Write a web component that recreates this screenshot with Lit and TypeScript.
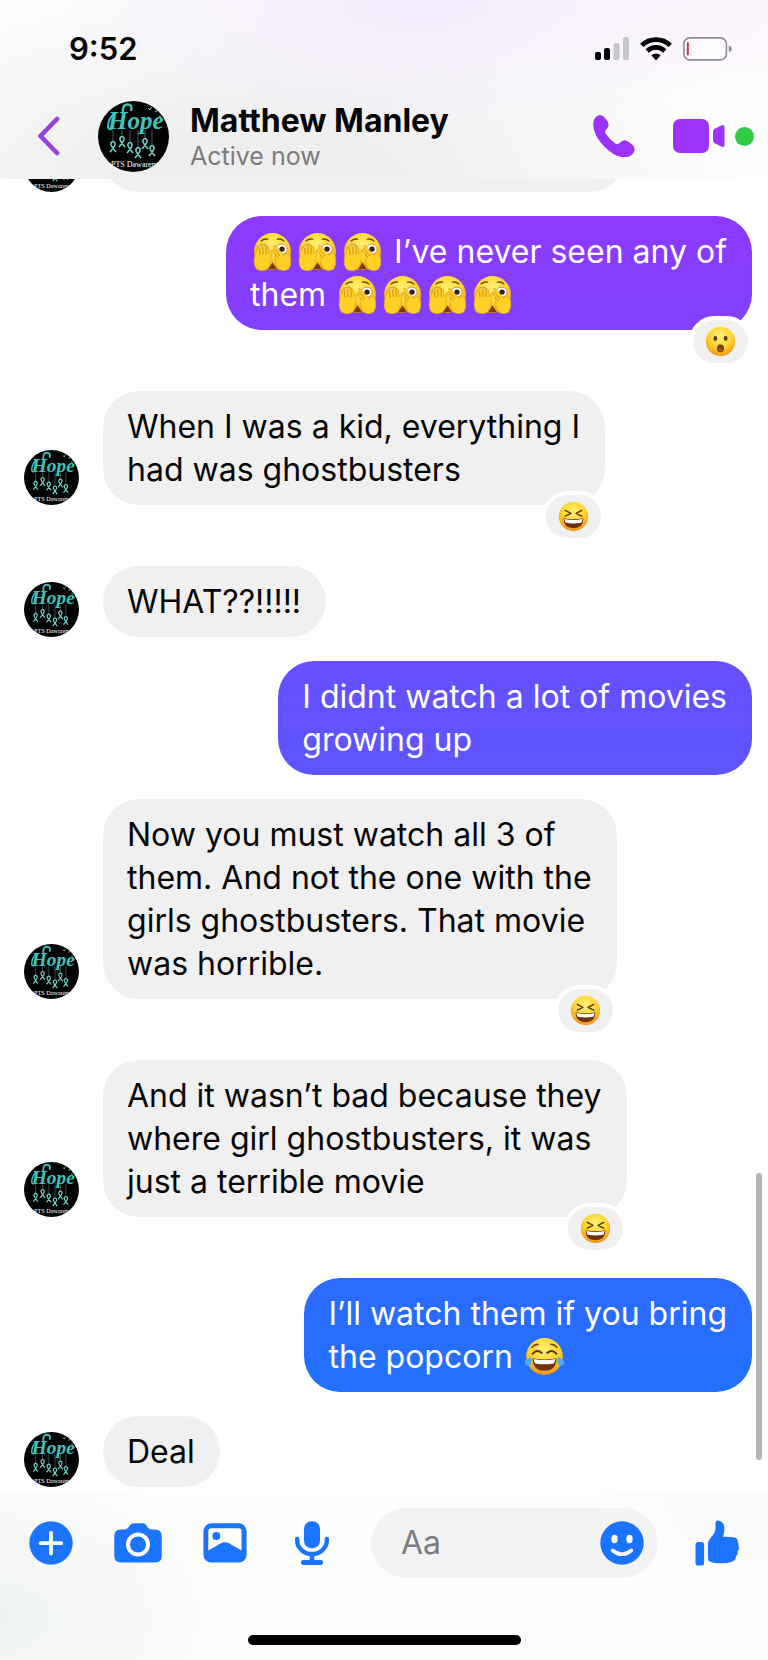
import { LitElement, html, css, svg, TemplateResult } from "lit";
import { customElement, property } from "lit/decorators.js";
import { classMap } from "lit/directives/class-map.js";

type EmojiName = "peek" | "wow" | "laugh" | "joy";
type Piece = string | { emoji: EmojiName };

interface Message {
  from: "them" | "me";
  tone?: "violet" | "indigo" | "blue";
  lines: Piece[][];
  reaction?: EmojiName;
}

const e = (emoji: EmojiName): Piece => ({ emoji });

const MESSAGES: Message[] = [
  {
    from: "me",
    tone: "violet",
    lines: [
      [e("peek"), e("peek"), e("peek"), " I’ve never seen any of"],
      ["them ", e("peek"), e("peek"), e("peek"), e("peek")],
    ],
    reaction: "wow",
  },
  { from: "them", lines: [["When I was a kid, everything I"], ["had was ghostbusters"]], reaction: "laugh" },
  { from: "them", lines: [["WHAT??!!!!!"]] },
  { from: "me", tone: "indigo", lines: [["I didnt watch a lot of movies"], ["growing up"]] },
  {
    from: "them",
    lines: [
      ["Now you must watch all 3 of"],
      ["them. And not the one with the"],
      ["girls ghostbusters. That movie"],
      ["was horrible."],
    ],
    reaction: "laugh",
  },
  {
    from: "them",
    lines: [["And it wasn’t bad because they"], ["where girl ghostbusters, it was"], ["just a terrible movie"]],
    reaction: "laugh",
  },
  { from: "me", tone: "blue", lines: [["I’ll watch them if you bring"], ["the popcorn ", e("joy")]] },
  { from: "them", lines: [["Deal"]] },
];

@customElement("emoji-face")
export class EmojiFace extends LitElement {
  @property() name: EmojiName = "laugh";

  static styles = css`
    :host {
      display: inline-block;
      line-height: 0;
    }
    .face {
      display: block;
      width: 100%;
      height: auto;
    }
  `;

  private labels: Record<EmojiName, string> = {
    peek: "Face with peeking eye",
    wow: "Face with open mouth",
    laugh: "Grinning squinting face",
    joy: "Face with tears of joy",
  };

  private features(): TemplateResult {
    switch (this.name) {
      case "peek":
        return svg`
          <path d="M7.500 8.200q3-2.400 6-1.600M22.500 6.600q3.500-.8 6 1.600" fill="none" stroke="#7a4a06" stroke-width="1.300" stroke-linecap="round"/>
          <ellipse cx="26.500" cy="15.800" rx="5" ry="4.600" fill="#fff" stroke="#b98a3a" stroke-width=".8"/>
          <circle cx="26.800" cy="15.800" r="2.500" fill="#3a2010"/>
          <ellipse cx="9" cy="16" rx="5.200" ry="4.800" fill="#f3dfa0" stroke="#b98a3a" stroke-width=".8"/>
          <path d="M14 34.300l4-6.300 4 6.300z" fill="#7a3a06"/>
          <path d="M1.200 24.500Q2 19.500 4.300 14.800q.9-1.100 1.700 0l.9-1.700q1.100-1.100 2 0l1.100-.9q1.200-.7 1.900.6l.9.4q1.200-.6 1.500.8l.5 6.200 1.800-3.200q1.400-.6 1.300 1.200l-1.600 7.700q-.2 5.700-3.200 8.600-4.500 2.400-9.500 0-3.200-3.600-2.400-10z" fill="#ffd127" stroke="#e39c1c" stroke-width=".6"/>
          <path d="M6 15l.6 6M8.900 13.500l.5 7M12 13.200l.2 7.300" stroke="#c98210" stroke-width=".8" fill="none"/>
          <path d="M34.800 24.500q-.3-3-2-4.400-1.800-.8-4.700 1.400l-7.800-9.300q-1.400-.6-1.200.9l2.400 5-2.400-2.600q-1.300 0-.8 1.300l2.300 4.700q-.6.800 0 2.500.4 6.800 3 10.500 4.500 2.400 9.200 0 2.800-3.600 2-10z" fill="#ffd127" stroke="#e39c1c" stroke-width=".6"/>
          <path d="M21.500 18l3.500 4.200M20.300 20.500l3.200 3.700" stroke="#c98210" stroke-width=".8" fill="none"/>`;
      case "wow":
        return svg`
          <ellipse cx="12" cy="14.500" rx="2.200" ry="2.800" fill="#5b3405"/>
          <ellipse cx="24" cy="14.500" rx="2.200" ry="2.800" fill="#5b3405"/>
          <ellipse cx="18" cy="26" rx="4" ry="4.400" fill="#6d3d06"/>
          <ellipse cx="18" cy="27.500" rx="2.500" ry="2.500" fill="#a15a1b"/>`;
      case "joy":
        return svg`
          <path d="M6.500 9.500q2.500-3 5.500-2.600M24 6.900q3-.4 5.500 2.600" fill="none" stroke="#7a4a06" stroke-width="1.500" stroke-linecap="round"/>
          <path d="M7 15.500q4-4.600 8.500-.8M20.500 14.700q4.500-3.800 8.500.8" fill="none" stroke="#5b3405" stroke-width="1.800" stroke-linecap="round"/>
          <path d="M7 19.500q11 2.600 22 0 0 11.500-11 11.500T7 19.500z" fill="#70320b"/>
          <path d="M8 20.200q10 2.200 20 0-.2 2.500-1.400 4.200-8.600 1.600-17.200 0Q8.200 22.700 8 20.200z" fill="#fff"/>
          <path d="M5.500 18.500q1.500 4.500-.6 7-2.300 2-4.400 0-1.600-2.300 0-4 2-1.200 5-3zM30.500 18.500q-1.500 4.500.6 7 2.300 2 4.400 0 1.600-2.300 0-4-2-1.200-5-3z" fill="#4aa9ea"/>`;
      default:
        return svg`
          <path d="M8.500 11l6.500 3.300-6.500 3.300M27.500 11L21 14.300l6.500 3.300" fill="none" stroke="#5b3405" stroke-width="1.700" stroke-linecap="round" stroke-linejoin="round"/>
          <path d="M6.500 20q11.500 2.600 23 0 0 11.500-11.500 11.500T6.500 20z" fill="#70320b"/>
          <path d="M7.500 20.800q10.500 2.300 21 0-.2 2.700-1.500 4.500-9 1.700-18 0-1.300-1.800-1.500-4.500z" fill="#fff"/>`;
    }
  }

  render() {
    return html`<svg class="face" viewBox="0 0 36 36" role="img" aria-label=${this.labels[this.name]}>
      <defs>
        <radialGradient id="skin" cx=".5" cy=".32" r=".7">
          <stop offset="0" stop-color="#fff27a" />
          <stop offset=".55" stop-color="#ffd52e" />
          <stop offset="1" stop-color="#ee8f14" />
        </radialGradient>
      </defs>
      <circle cx="18" cy="18" r="17" fill="url(#skin)" />
      ${this.features()}
    </svg>`;
  }
}

@customElement("contact-avatar")
export class ContactAvatar extends LitElement {
  static styles = css`
    :host {
      display: block;
      flex: none;
    }
    .disc {
      display: block;
      width: 100%;
      height: auto;
    }
    .script {
      font: italic 700 25px "Liberation Serif", serif;
      fill: #3fc4bb;
    }
    .caption {
      font: 400 8px "Liberation Serif", serif;
      fill: #ffffff;
    }
  `;

  render() {
    const ribbons = [
      [15, 45],
      [24, 40],
      [32, 46],
      [40, 51],
      [47, 42],
      [54, 49],
    ];
    return html`<svg class="disc" viewBox="0 0 71 71" role="img" aria-label="Matthew Manley">
      <defs>
        <clipPath id="round"><circle cx="35.500" cy="35.500" r="35.500" /></clipPath>
      </defs>
      <g clip-path="url(#round)">
        <rect width="71" height="71" fill="#020303" />
        ${ribbons.map(
          ([x, y]) => svg`
            <path d="M${x} 29V${y - 5}" stroke="#6f8482" stroke-width=".7"/>
            <path d="M${x - 3} ${y + 6}C${x - 1} ${y + 3} ${x + 3} ${y} ${x + 2} ${y - 3}Q${x} ${y - 6} ${x - 2} ${y - 3}C${x - 3} ${y} ${x + 1} ${y + 3} ${x + 3} ${y + 6}"
              fill="none" stroke="#74d8cf" stroke-width="1.500"/>`,
        )}
        <path d="M25 12Q24 3.500 29.500 3.500T33 10" fill="none" stroke="#3fc4bb" stroke-width="2.400" />
        <path d="M17 12q-7 5-7 14 1 4 5 1" fill="none" stroke="#3fc4bb" stroke-width="1.800" />
        <text class="script" x="10" y="28">Hope</text>
        <path d="M50 7l2 2 1.500-3M57 10l1.500 1 1-2.500M54 3l1 1.500 2-1.500M61 15l1 .8 1.200-1" fill="none" stroke="#8fd8d2" stroke-width=".9" />
        <text class="caption" x="13" y="66">PTS Dawareness</text>
      </g>
    </svg>`;
  }
}

@customElement("chat-message")
export class ChatMessage extends LitElement {
  @property({ attribute: false }) message!: Message;

  static styles = css`
    :host {
      display: block;
    }
    .row {
      display: flex;
      align-items: flex-end;
      gap: 24px;
    }
    .row.me {
      justify-content: flex-end;
    }
    .row.reacted {
      margin-bottom: 37px;
    }
    .avatar {
      width: 55px;
    }
    .bubble {
      position: relative;
      padding: 14px 25px 14px 24px;
      border-radius: 36px;
      background: #f0f0f0;
      color: #050505;
      font-size: 32px;
      line-height: 43px;
    }
    .line {
      display: block;
      white-space: pre;
      height: 43px;
    }
    .violet {
      background: linear-gradient(#8d39ff, #8140ff);
      color: #fff;
    }
    .indigo {
      background: linear-gradient(#674fff, #5e55ff);
      color: #fff;
    }
    .blue {
      background: linear-gradient(#2c6aff, #2271ff);
      color: #fff;
    }
    .glyph {
      width: 39px;
      margin: 0 3px;
      vertical-align: -8px;
    }
    .reaction {
      position: absolute;
      right: 0;
      bottom: -37px;
      display: grid;
      place-items: center;
      box-sizing: border-box;
      width: 63px;
      height: 51px;
      border: 4px solid #fff;
      border-radius: 26px;
      background: #f0f0f0;
    }
    .small {
      width: 31px;
    }
  `;

  render() {
    const m = this.message;
    return html`<div class=${classMap({ row: true, me: m.from === "me", reacted: !!m.reaction })}>
      ${m.from === "them" ? html`<contact-avatar class="avatar"></contact-avatar>` : null}
      <div class=${classMap({ bubble: true, [m.tone ?? "plain"]: true })}>
        ${m.lines.map(
          (line) =>
            html`<span class="line"
              >${line.map((p) =>
                typeof p === "string" ? p : html`<emoji-face class="glyph" name=${p.emoji}></emoji-face>`,
              )}</span
            >`,
        )}
        ${m.reaction
          ? html`<span class="reaction"><emoji-face class="small" name=${m.reaction}></emoji-face></span>`
          : null}
      </div>
    </div>`;
  }
}

@customElement("app-root")
export class AppRoot extends LitElement {
  static styles = css`
    :host {
      display: flex;
      flex-direction: column;
      height: 100vh;
      overflow: hidden;
      background: #fff;
      color: #050505;
      font-family: Inter, "Liberation Sans", sans-serif;
    }
    button {
      display: grid;
      place-items: center;
      flex: none;
      padding: 0;
      border: 0;
      background: none;
      color: inherit;
    }
    svg {
      display: block;
    }
    .top {
      flex: none;
      background:
        radial-gradient(ellipse 48% 75% at 55% 0, #f4eafd, #f4eafd00),
        radial-gradient(ellipse 30% 60% at 96% 0, #fdf5fd, #fdf5fd00),
        radial-gradient(ellipse 62% 110% at 34% 100%, #efefef 30%, #efefef00),
        #fdfdfd;
    }
    .status {
      display: flex;
      align-items: center;
      justify-content: space-between;
      height: 98px;
      padding: 0 36px 0 69px;
    }
    .clock {
      font-size: 31px;
      font-weight: 600;
      line-height: 40px;
    }
    .signals {
      display: flex;
      align-items: center;
      gap: 11px;
    }
    .head {
      display: flex;
      align-items: center;
      height: 76px;
      padding: 0 14px 5px 27px;
    }
    .back {
      width: 44px;
      height: 48px;
      color: #9a3fdf;
    }
    .portrait {
      width: 71px;
      margin: 0 21px 0 27px;
    }
    .who {
      flex: 1;
      min-width: 0;
    }
    .name {
      margin: 0;
      font-size: 32px;
      font-weight: 700;
      line-height: 40px;
      white-space: nowrap;
    }
    .presence {
      margin: 0;
      color: #7c7c7e;
      font-size: 25px;
      line-height: 30px;
    }
    .calls {
      display: flex;
      align-items: center;
      color: #9c33fb;
    }
    .video {
      margin: 0 10px 0 38px;
    }
    .online {
      width: 19px;
      height: 19px;
      border-radius: 50%;
      background: #31cc46;
    }
    .thread {
      position: relative;
      flex: 1;
      min-height: 0;
      display: flex;
      flex-direction: column;
      justify-content: flex-end;
      gap: 24px;
      padding: 0 16px 5px 24px;
      overflow: hidden;
    }
    .earlier {
      display: flex;
      align-items: flex-end;
      gap: 24px;
    }
    .earlier-avatar {
      width: 55px;
    }
    .earlier-bubble {
      width: 522px;
      height: 71px;
      border-radius: 36px;
      background: #f0f0f0;
    }
    .scroll {
      position: absolute;
      right: 6px;
      bottom: 32px;
      width: 6px;
      height: 287px;
      border-radius: 3px;
      background: #b5b5b5;
    }
    .bottom {
      flex: none;
      padding: 16px 27px 15px;
      background:
        radial-gradient(ellipse 32% 100% at 0 75%, #eff2f3, #eff2f300),
        radial-gradient(ellipse 26% 80% at 100% 0, #f9f9f9, #f9f9f900),
        #fefefe;
      color: #1b74ff;
    }
    .composer {
      display: flex;
      align-items: center;
      gap: 35px;
    }
    .tools {
      display: flex;
      gap: 39px;
    }
    .tool {
      width: 48px;
      height: 48px;
    }
    .field {
      display: flex;
      align-items: center;
      flex: 1;
      min-width: 0;
      height: 70px;
      padding: 0 14px 0 30px;
      border-radius: 35px;
      background: #f3f3f3;
    }
    .input {
      flex: 1;
      min-width: 0;
      padding: 0;
      border: 0;
      outline: 0;
      background: none;
      color: #050505;
      font: 400 32px/40px Inter, "Liberation Sans", sans-serif;
    }
    .input::placeholder {
      color: #7c7c7e;
      opacity: 1;
    }
    .home {
      width: 273px;
      height: 10px;
      margin: 57px auto 0;
      border-radius: 5px;
      background: #000;
    }
  `;

  render() {
    return html`
      <header class="top">
        <div class="status">
          <time class="clock">9:52</time>
          <div class="signals">
            <svg width="34" height="24" viewBox="0 0 34 24" role="img" aria-label="Cellular signal">
              <rect x="0" y="15" width="6" height="8" rx="2" fill="#000" />
              <rect x="9" y="11" width="6" height="12" rx="2" fill="#000" />
              <rect x="18.500" y="6" width="6" height="17" rx="2" fill="#c7c6ca" />
              <rect x="28" y="0" width="6" height="23" rx="2" fill="#c7c6ca" />
            </svg>
            <svg width="32" height="24" viewBox="0 0 32 24" role="img" aria-label="Wi-Fi">
              <g fill="none" stroke="#000" stroke-width="4.600">
                <path d="M1.700 8.400a20.500 20.500 0 0 1 28.600 0" />
                <path d="M7.200 14a12.500 12.500 0 0 1 17.600 0" />
              </g>
              <path d="M11.300 18.300a6.800 6.800 0 0 1 9.400 0L16 23.500z" />
            </svg>
            <svg width="49" height="24" viewBox="0 0 49 24" role="img" aria-label="Battery low">
              <rect x=".9" y=".9" width="42.500" height="22" rx="6" fill="#fff" fill-opacity=".6" stroke="#8e8e92" stroke-width="1.600" />
              <rect x="3.800" y="5" width="2" height="13.500" rx="1" fill="#d8323c" />
              <path d="M45.800 8.500q3 1 3 3.400t-3 3.400z" fill="#8e8e92" />
            </svg>
          </div>
        </div>
        <div class="head">
          <button class="back" aria-label="Back">
            <svg width="24" height="40" viewBox="0 0 24 40" fill="none" stroke="currentColor" stroke-width="4.600" stroke-linecap="round" stroke-linejoin="round">
              <path d="M20 3L3.500 20 20 37" />
            </svg>
          </button>
          <contact-avatar class="portrait"></contact-avatar>
          <div class="who">
            <h1 class="name">Matthew Manley</h1>
            <p class="presence">Active now</p>
          </div>
          <div class="calls">
            <button aria-label="Audio call">
              <svg width="42" height="42" viewBox="0 0 42 42" fill="currentColor">
                <path d="M3.200 1.800Q6-.6 10 .9q1.800 1 4 4.700 2.600 4.200 1 6.600l-2.300 3q-1 1.600.2 3.600 3.800 6.300 9.700 9.900 2 1 3.600-.4l3.400-2.500q2-1.200 4.600.2 3.200 1.700 5.900 4.500 2.700 3.300.6 6.900-3.400 5.400-11.300 4.800-8.400-1-17.200-9.700Q.3 20.700.2 9.800.3 4.300 3.200 1.800z" />
              </svg>
            </button>
            <button class="video" aria-label="Video call">
              <svg width="52" height="34" viewBox="0 0 52 34" fill="currentColor">
                <rect width="36" height="34" rx="7" />
                <path d="M40 12.800q0-1.600 1.400-2.700l6.800-3.600q3.300-1.400 3.300 1.300v18.400q0 2.700-3.300 1.300l-6.800-3.600Q40 22.800 40 21.200z" />
              </svg>
            </button>
            <span class="online" role="img" aria-label="Online"></span>
          </div>
        </div>
      </header>

      <main class="thread">
        <div class="earlier">
          <contact-avatar class="earlier-avatar"></contact-avatar>
          <div class="earlier-bubble"></div>
        </div>
        ${MESSAGES.map((m) => html`<chat-message .message=${m}></chat-message>`)}
        <div class="scroll"></div>
      </main>

      <footer class="bottom">
        <div class="composer">
          <div class="tools">
            <button class="tool" aria-label="More">
              <svg width="44" height="44" viewBox="0 0 44 44">
                <circle cx="22" cy="22" r="21.700" fill="currentColor" />
                <path d="M22 12v20.500M11.700 22.200h20.600" stroke="#fff" stroke-width="3.800" stroke-linecap="round" />
              </svg>
            </button>
            <button class="tool" aria-label="Camera">
              <svg width="48" height="44" viewBox="0 0 48 44">
                <path d="M6.500 8.500h4.200q2.200 0 3.600-2l1.500-2Q17.200 2.300 20 2.300h8.500q2.600 0 4 2.200l1.300 2q1.400 2 3.700 2h3.500q6.700 0 6.700 6.500v20q0 6.500-6.700 6.500H7Q.3 41.500.3 35V15q0-6.500 6.200-6.500z" fill="currentColor" />
                <circle cx="24" cy="23.500" r="10" fill="none" stroke="#fff" stroke-width="4" />
              </svg>
            </button>
            <button class="tool" aria-label="Photo library">
              <svg width="44" height="44" viewBox="0 0 44 44">
                <rect x=".4" y="2.300" width="43.200" height="39.200" rx="8" fill="currentColor" />
                <path d="M8.500 7.200h27q3 0 3 3v19.300Q31 25.500 27 22.800q-5-2.800-9.500-.3-4 2.400-12.200 7V10.200q0-3 3.200-3z" fill="#fff" />
                <circle cx="13.300" cy="15" r="4" fill="currentColor" />
              </svg>
            </button>
            <button class="tool" aria-label="Voice clip">
              <svg width="36" height="44" viewBox="0 0 36 44">
                <rect x="10" y=".3" width="16" height="27" rx="7.500" fill="currentColor" />
                <path d="M3.200 18v1.500a14.800 13.500 0 0 0 29.600 0V18" fill="none" stroke="currentColor" stroke-width="4.400" stroke-linecap="round" />
                <path d="M18 33v7" stroke="currentColor" stroke-width="4.600" />
                <rect x="7" y="39" width="22" height="5" rx="2" fill="currentColor" />
              </svg>
            </button>
          </div>
          <div class="field">
            <input class="input" type="text" placeholder="Aa" aria-label="Message" />
            <button aria-label="Emoji">
              <svg width="44" height="44" viewBox="0 0 44 44">
                <circle cx="22" cy="22" r="21.700" fill="currentColor" />
                <ellipse cx="14.500" cy="18" rx="3.200" ry="4.200" fill="#fff" />
                <ellipse cx="29.500" cy="18" rx="3.200" ry="4.200" fill="#fff" />
                <path d="M12.700 29.500q9.300 7.500 18.600 0" fill="none" stroke="#fff" stroke-width="3.600" stroke-linecap="round" />
              </svg>
            </button>
          </div>
          <button class="tool" aria-label="Send a like">
            <svg width="44" height="46" viewBox="0 0 44 46" fill="currentColor">
              <rect x=".5" y="22" width="8.600" height="23.500" rx="2.800" />
              <path d="M20.500 2.500Q20.700.4 22.800.5q6.200.6 6.600 7.500.2 4-1.400 8.700 7-.2 11.500.8 3.600 1 3.100 4.300 1.400 2 .9 4.200 1.300 3.200-.9 5.200.8 3.300-1.700 5 .2 4-3.900 5.500-5 1.800-12.500 1.600-8.500-.2-10.800-2.500-.7-.8-.7-3V24q0-3.400 2.700-6.300 4.800-4.500 4.800-10.200z" />
            </svg>
          </button>
        </div>
        <div class="home"></div>
      </footer>
    `;
  }
}
